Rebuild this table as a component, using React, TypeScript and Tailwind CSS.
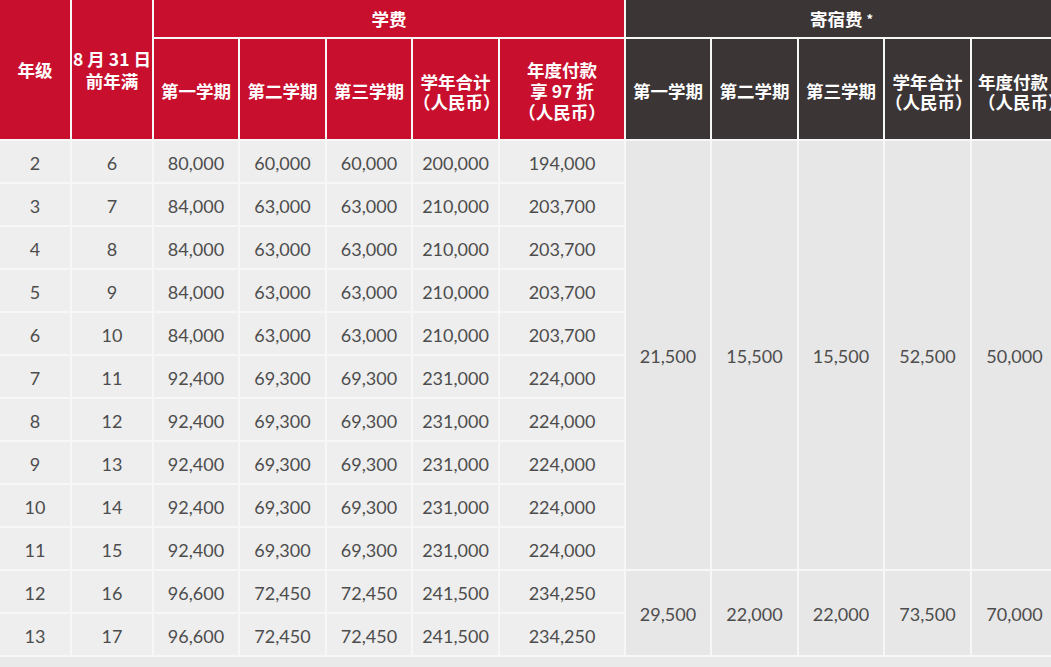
import React from "react";

const RED = "bg-[#c80f2e]";
const DARK = "bg-[#3b3536]";

const rows: [string, string, string, string, string, string, string][] = [
  ["2", "6", "80,000", "60,000", "60,000", "200,000", "194,000"],
  ["3", "7", "84,000", "63,000", "63,000", "210,000", "203,700"],
  ["4", "8", "84,000", "63,000", "63,000", "210,000", "203,700"],
  ["5", "9", "84,000", "63,000", "63,000", "210,000", "203,700"],
  ["6", "10", "84,000", "63,000", "63,000", "210,000", "203,700"],
  ["7", "11", "92,400", "69,300", "69,300", "231,000", "224,000"],
  ["8", "12", "92,400", "69,300", "69,300", "231,000", "224,000"],
  ["9", "13", "92,400", "69,300", "69,300", "231,000", "224,000"],
  ["10", "14", "92,400", "69,300", "69,300", "231,000", "224,000"],
  ["11", "15", "92,400", "69,300", "69,300", "231,000", "224,000"],
  ["12", "16", "96,600", "72,450", "72,450", "241,500", "234,250"],
  ["13", "17", "96,600", "72,450", "72,450", "241,500", "234,250"],
];

const hd =
  "flex flex-col items-center justify-center text-white font-bold text-[17.5px] leading-[20px] text-center";
const num =
  "flex items-center justify-center pt-[3px] text-[#4d4d4d] text-[18px] bg-[#eeeeee]";
const board =
  "flex items-center justify-center pt-[3px] text-[#4d4d4d] text-[18px] bg-[#e7e7e7]";

const numFont = { fontFamily: 'Lato, "Noto Sans", sans-serif' };

export default function App() {
  return (
    <div
      className="w-[1051px] h-[667px] overflow-hidden bg-[#f7f7f7]"
      style={{ fontFamily: '"Noto Sans CJK SC", sans-serif' }}
    >
      <div
        className="grid w-[1057px] gap-[2px] bg-[#f7f7f7]"
        style={{
          gridTemplateColumns:
            "70px 80px 84px 85px 84px 85px 124px 84px 85px 84px 85px 85px",
          gridTemplateRows: "37px 100px repeat(12, 41px) 12px",
        }}
      >
        {/* header */}
        <div className={`${hd} ${RED} row-span-2 col-start-1 row-start-1`}>年级</div>
        <div className={`${hd} ${RED} row-span-2 col-start-2 row-start-1 leading-[22px]`}>
          <span className="whitespace-nowrap">8 月 31 日</span>
          <span>前年满</span>
        </div>
        <div className={`${hd} ${RED} col-start-3 col-span-5 row-start-1`}>学费</div>
        <div className={`${hd} ${DARK} col-start-8 col-span-5 row-start-1`}>
          <span>
            寄宿费 <span className="align-top text-[13px]">*</span>
          </span>
        </div>

        <div className={`${hd} ${RED} col-start-3 row-start-2 pt-[4px]`}>第一学期</div>
        <div className={`${hd} ${RED} col-start-4 row-start-2 pt-[4px]`}>第二学期</div>
        <div className={`${hd} ${RED} col-start-5 row-start-2 pt-[4px]`}>第三学期</div>
        <div className={`${hd} ${RED} col-start-6 row-start-2 pt-[6px]`}>
          <span>学年合计</span>
          <span>（人民币）</span>
        </div>
        <div className={`${hd} ${RED} col-start-7 row-start-2 leading-[21px] pt-[2px]`}>
          <span>年度付款</span>
          <span>享 97 折</span>
          <span>（人民币）</span>
        </div>

        <div className={`${hd} ${DARK} col-start-8 row-start-2 pt-[4px]`}>第一学期</div>
        <div className={`${hd} ${DARK} col-start-9 row-start-2 pt-[4px]`}>第二学期</div>
        <div className={`${hd} ${DARK} col-start-10 row-start-2 pt-[4px]`}>第三学期</div>
        <div className={`${hd} ${DARK} col-start-11 row-start-2 pt-[6px]`}>
          <span>学年合计</span>
          <span>（人民币）</span>
        </div>
        <div className={`${hd} ${DARK} col-start-12 row-start-2 pt-[6px] items-start pl-[6px]`}>
          <span>年度付款</span>
          <span>（人民币）</span>
        </div>

        {/* data */}
        {rows.map((r, i) =>
          r.map((v, j) => (
            <div
              key={`${i}-${j}`}
              className={num}
              style={{ ...numFont, gridRow: i + 3, gridColumn: j + 1 }}
            >
              {v}
            </div>
          ))
        )}

        {["21,500", "15,500", "15,500", "52,500", "50,000"].map((v, j) => (
          <div
            key={`b1-${j}`}
            className={board}
            style={{ ...numFont, gridRow: "3 / span 10", gridColumn: j + 8 }}
          >
            {v}
          </div>
        ))}
        {["29,500", "22,000", "22,000", "73,500", "70,000"].map((v, j) => (
          <div
            key={`b2-${j}`}
            className={board}
            style={{ ...numFont, gridRow: "13 / span 2", gridColumn: j + 8 }}
          >
            {v}
          </div>
        ))}

        <div className="col-span-12 bg-[#e9e9e9]" style={{ gridRow: 15 }} />
      </div>
    </div>
  );
}
